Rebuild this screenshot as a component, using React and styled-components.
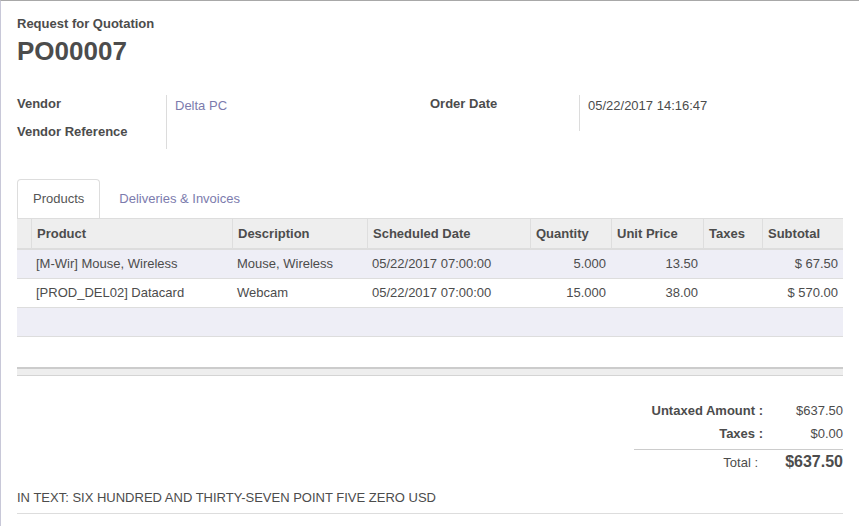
import React from 'react'
import styled, { createGlobalStyle } from 'styled-components'

const GlobalStyle = createGlobalStyle`
  html, body {
    margin: 0;
    padding: 0;
    background: #ffffff;
  }
  body {
    font-family: "Liberation Sans", Arial, sans-serif;
    font-size: 13px;
    line-height: 18px;
    color: #4c4c4c;
  }
`

const lines = [
    { product: '[M-Wir] Mouse, Wireless', description: 'Mouse, Wireless', date: '05/22/2017 07:00:00', qty: '5.000', price: '13.50', taxes: '', subtotal: '$ 67.50' },
    { product: '[PROD_DEL02] Datacard', description: 'Webcam', date: '05/22/2017 07:00:00', qty: '15.000', price: '38.00', taxes: '', subtotal: '$ 570.00' },
]

const columns = [
    { key: 'handle', label: '', width: 14 },
    { key: 'product', label: 'Product', width: 201 },
    { key: 'description', label: 'Description', width: 135 },
    { key: 'date', label: 'Scheduled Date', width: 163 },
    { key: 'qty', label: 'Quantity', width: 81, numeric: true },
    { key: 'price', label: 'Unit Price', width: 92, numeric: true },
    { key: 'taxes', label: 'Taxes', width: 59 },
    { key: 'subtotal', label: 'Subtotal', width: 81, numeric: true },
]

function App() {
    return (
        <>
            <GlobalStyle />
            <Sheet>
                <Caption>Request for Quotation</Caption>
                <Title>PO00007</Title>

                <Groups>
                    <Group>
                        <Labels>
                            <Label>Vendor</Label>
                            <Label>Vendor Reference</Label>
                        </Labels>
                        <Values $height={54}>
                            <Link>Delta PC</Link>
                        </Values>
                    </Group>
                    <Group>
                        <Labels>
                            <Label>Order Date</Label>
                        </Labels>
                        <Values $height={36}>
                            <span>05/22/2017 14:16:47</span>
                        </Values>
                    </Group>
                </Groups>

                <Tabs>
                    <Tab $active>Products</Tab>
                    <Tab>Deliveries &amp; Invoices</Tab>
                </Tabs>

                <Table>
                    <colgroup>
                        {columns.map((col) => <col key={col.key} style={{ width: col.width }} />)}
                    </colgroup>
                    <thead>
                        <tr>
                            {columns.map((col) => <Th key={col.key}>{col.label}</Th>)}
                        </tr>
                    </thead>
                    <tbody>
                        {lines.map((line, index) => (
                            <Row key={index} $odd={index % 2 === 0}>
                                {columns.map((col) => (
                                    <Td key={col.key} $numeric={col.numeric}>{line[col.key] || ''}</Td>
                                ))}
                            </Row>
                        ))}
                        <Row $odd>
                            <Td colSpan={columns.length} />
                        </Row>
                    </tbody>
                </Table>
                <ListFooter />

                <Totals>
                    <TotalLabel>Untaxed Amount :</TotalLabel>
                    <TotalValue>$637.50</TotalValue>
                    <TotalLabel $line>Taxes :</TotalLabel>
                    <TotalValue $line>$0.00</TotalValue>
                    <TotalLabel $grand>Total :</TotalLabel>
                    <TotalValue $grand>$637.50</TotalValue>
                </Totals>

                <InText>IN TEXT: SIX HUNDRED AND THIRTY-SEVEN POINT FIVE ZERO USD</InText>
            </Sheet>
        </>
    )
}

const Sheet = styled.div`
    min-height: 526px;
    box-sizing: border-box;
    border-top: 1px solid #a8a8a8;
    border-left: 1px solid #c8c8d8;
    padding: 14px 16px 0 16px;
`

const Caption = styled.div`
    font-weight: bold;
`

const Title = styled.h1`
    margin: 4px 0 0;
    font-size: 26px;
    line-height: 28.6px;
    font-weight: bold;
    color: #4c4c4c;
`

const Groups = styled.div`
    display: grid;
    grid-template-columns: 1fr 1fr;
    margin-top: 29px;
`

const Group = styled.div`
    display: flex;
    align-items: flex-start;
`

const Labels = styled.div`
    width: 149px;
    display: flex;
    flex-direction: column;
`

const Label = styled.div`
    height: 28px;
    font-weight: bold;
`

const Values = styled.div`
    flex: 1;
    height: ${(props) => props.$height}px;
    box-sizing: border-box;
    border-left: 1px solid #dcdcdc;
    padding: 2px 0 0 8px;
`

const Link = styled.span`
    color: #7c7bad;
`

const Tabs = styled.div`
    display: flex;
    margin-top: 28px;
`

const Tab = styled.div`
    box-sizing: border-box;
    height: 39px;
    padding: 10px 15px;
    margin-right: 2px;
    border: 1px solid ${(props) => props.$active ? '#dddddd' : 'transparent'};
    border-bottom: none;
    border-radius: 4px 4px 0 0;
    background: #ffffff;
    color: ${(props) => props.$active ? '#555555' : '#7c7bad'};
    &:last-child {
        padding-left: 16px;
    }
`

const Table = styled.table`
    width: 826px;
    table-layout: fixed;
    border-collapse: separate;
    border-spacing: 0;
`

const Th = styled.th`
    height: 32px;
    box-sizing: border-box;
    padding: 6px 5px 0;
    vertical-align: top;
    text-align: left;
    font-weight: bold;
    background: #eeeeee;
    border-top: 1px solid #dddddd;
    border-left: 1px solid #dedede;
    border-bottom: 2px solid #dddddd;
    white-space: nowrap;
    overflow: hidden;
    &:first-child {
        border-left: none;
    }
`

const Row = styled.tr`
    background: ${(props) => props.$odd ? '#eeeef6' : '#ffffff'};
`

const Td = styled.td`
    height: 29px;
    box-sizing: border-box;
    padding: 5px 5px 0;
    vertical-align: top;
    border-bottom: 1px solid #dddddd;
    text-align: ${(props) => props.$numeric ? 'right' : 'left'};
    white-space: nowrap;
    overflow: hidden;
`

const ListFooter = styled.div`
    width: 826px;
    margin-top: 30px;
    height: 6px;
    background: #eeeeee;
    border-top: 2px solid #cccccc;
    border-bottom: 1px solid #d4d4d4;
`

const Totals = styled.div`
    width: 209px;
    margin: 26px 0 0 617px;
    display: grid;
    grid-template-columns: 1fr 80px;
`

const TotalLabel = styled.div`
    box-sizing: border-box;
    text-align: right;
    white-space: nowrap;
    padding-right: ${(props) => props.$grand ? '5px' : '0'};
    padding-top: ${(props) => props.$grand ? '4px' : '0'};
    font-weight: ${(props) => props.$grand ? 'normal' : 'bold'};
    height: ${(props) => props.$grand ? '22px' : props.$line ? '25px' : '23px'};
    border-bottom: ${(props) => props.$line ? '1px solid #cccccc' : 'none'};
`

const TotalValue = styled.div`
    box-sizing: border-box;
    text-align: right;
    white-space: nowrap;
    padding-top: ${(props) => props.$grand ? '3px' : '0'};
    height: ${(props) => props.$grand ? '22px' : props.$line ? '25px' : '23px'};
    border-bottom: ${(props) => props.$line ? '1px solid #cccccc' : 'none'};
    font-size: ${(props) => props.$grand ? '16px' : '13px'};
    font-weight: ${(props) => props.$grand ? 'bold' : 'normal'};
`

const InText = styled.div`
    width: 826px;
    margin-top: 17px;
    padding-bottom: 6px;
    border-bottom: 1px solid #dddddd;
`

export default App
